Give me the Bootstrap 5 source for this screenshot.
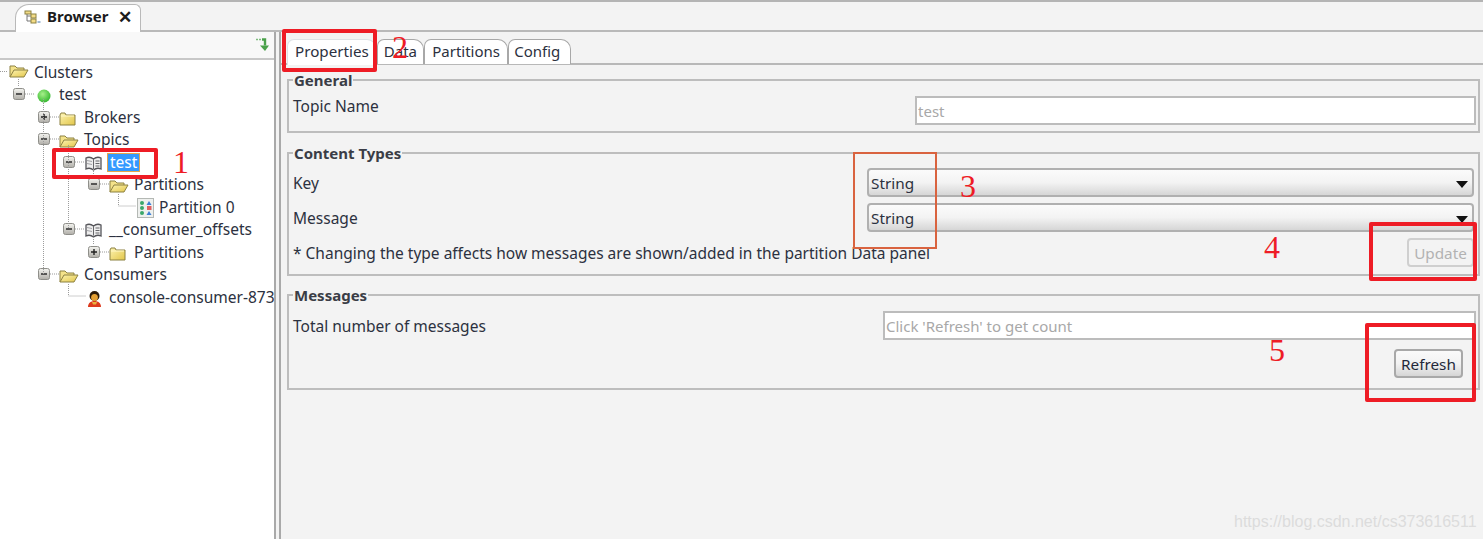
<!DOCTYPE html>
<html lang="en"><head><meta charset="utf-8"><title>Browser</title>
<link href="https://cdn.jsdelivr.net/npm/bootstrap@5.3.0/dist/css/bootstrap.min.css" rel="stylesheet">
<style>
html,body{height:539px;overflow:hidden}
body{background:#f3f3f3;font-family:"Noto Sans",sans-serif;font-size:15.5px;color:#2c3140;position:relative}
.topbar{height:32px;border-top:2px solid #b4b4b4;border-bottom:2px solid #b9b9b9;padding-left:15px;background:#f3f3f3}
.mtab{height:29px;margin-top:2px;width:126px;background:#fff;border:1px solid #b9b9b9;border-bottom:0;border-radius:14px 6px 0 0;font-weight:700;color:#1c1c1c;padding:0 0 5px 8px;gap:6px;font-size:15px}
.mtab .cl{font-size:17px;margin-left:3px;line-height:1}
.body-split{height:507px}
.lpane{width:276px;border-right:2px solid #a9a9a9;background:#fff;flex:none;position:relative;overflow:hidden}
.ltool{height:28px;background:#f8f8f8;border-bottom:2px solid #c8c8c8;padding:6px 3px 0 0}
.tree{white-space:nowrap;padding-top:.5px}
.trow{height:22.5px;line-height:22.5px}
.slot{width:25px;flex:none;height:22px}
.ico{margin-left:0;margin-top:1px}
.sel{background:#3399ff;color:#fff;outline:1px solid #e5a54b;line-height:17px;height:17px;padding:0 2px;margin-left:-1px}
.rpane{margin-left:3px;flex:1;border-left:2px solid #a9a9a9;padding:7px 3px 0 6px;min-width:0}
.tabs{height:26px;border-bottom:2px solid #b8b8b8;margin-right:-3px;margin-left:-6px;padding-left:6px;flex-wrap:nowrap}
.tabs .nav-link{height:25px;line-height:23px;padding:0 7.25px;font-size:15px;color:#2c3140;background:#fff;border:1px solid #a8a8a8;border-bottom:0;border-radius:7px 10px 0 0;margin:0}
.tabs .nav-link.active{color:#2c3140;background:#fff;height:26px;font-size:15.2px;padding:0 7px}
.tabs .nav-link.tab-d{padding:0 6px}
.tabs .nav-link.tab-c{padding:0 10px 0 5px}
.grp{border:2px solid #bdbdbd;padding:0 2px 0 4px;margin:0;position:relative}
.grp legend{float:none;width:auto;font-size:15px;font-weight:700;line-height:20px;margin:0;padding:0 1px;color:#3a3d46}
.grp1{margin-top:5px;padding-top:6px;padding-bottom:6px}
.grp2{margin-top:10px;padding-top:5px;padding-bottom:7px}
.grp3{margin-top:9px;padding-top:6px;padding-bottom:10px}
.frow{height:29px}
.lbl{padding-top:3px}
.lbl-top{padding-top:1px}
.fld{height:29px;border:2px solid #bcbcbc;border-radius:0;background:#fff;font-size:15px;padding:0 1px;color:#a8a8a8;box-shadow:none}
.fld:disabled{background:#fff}
.fld::placeholder{color:#a8a8a8}
.fld-a{width:561px}
.fld-b{width:593px}
.sel-box{width:607px;height:29px;border:2px solid #b0b0b0;border-radius:4px;background:linear-gradient(#fbfbfb,#f3f3f3 50%,#d6d6d6);padding:0 2px 0 2px;color:#2c3140;font-size:15.3px;line-height:24px;margin-right:2px}
.arrow{width:0;height:0;border-left:6px solid transparent;border-right:6px solid transparent;border-top:7px solid #111;margin-right:2px;margin-top:3px}
.btn-upd,.btn-upd:disabled{height:29px;width:67px;padding:0;font-size:15.3px;line-height:24px;border:2px solid #cfcfcf;border-radius:4px;color:#b2b2b2;background:#f3f3f3;opacity:1;margin-right:2px}
.btn-ref{height:29px;width:69px;padding:0;font-size:15.3px;line-height:24px;border:2px solid #a8a8a8;border-radius:4px;color:#23283a;background:linear-gradient(#fafafa,#f2f2f2 50%,#d5d5d5)}
.mt-6px{margin-top:6px}.mt-9px{margin-top:9px}.mr-13px{margin-right:13px}
.lines{position:absolute;left:0;top:0;pointer-events:none}
.rbox{position:absolute;border:4px solid #ee1c25;border-radius:2px}
.b1{left:52px;top:148px;width:106px;height:31px}
.b2{left:282px;top:29px;width:95px;height:43px}
.b3{left:853px;top:152px;width:84px;height:97px;border:2px solid #d9633f;border-radius:0}
.b4{left:1369px;top:222px;width:108px;height:59px}
.b5{left:1365px;top:323px;width:111px;height:79px}
.num{position:absolute;font-family:"Liberation Serif",serif;font-size:32px;line-height:32px;color:#ee1c25}
.n1{left:173px;top:146px}.n2{left:392px;top:31px}.n3{left:960px;top:170px}.n4{left:1264px;top:231px}.n5{left:1269px;top:334px}
.mark-url{position:absolute;left:1234px;top:511px;font-family:"Liberation Sans",sans-serif;font-size:16px;line-height:22px;color:#dcdcdc;white-space:nowrap}
</style></head>
<body>
<svg width="0" height="0" class="position-absolute">
<defs>
<linearGradient id="gt" x1="0" y1="0" x2="0" y2="1"><stop offset="0" stop-color="#f4f4f0"/><stop offset="1" stop-color="#b0aea8"/></linearGradient>
<linearGradient id="gf" x1="0" y1="0" x2="1" y2="1"><stop offset="0" stop-color="#fdf3b0"/><stop offset="1" stop-color="#e2c64a"/></linearGradient>
<radialGradient id="gb" cx=".4" cy=".35" r=".7"><stop offset="0" stop-color="#a6f08a"/><stop offset="1" stop-color="#2fb52a"/></radialGradient>
<symbol id="minus" viewBox="0 0 25 22"><rect x="4.500" y="5.500" width="11" height="11" rx="2" fill="url(#gt)" stroke="#8f8f8a"/><path d="M7 11h6" stroke="#222" stroke-width="1.400"/><path d="M16 11h9" stroke="#999" stroke-dasharray="1 1"/></symbol>
<symbol id="plus" viewBox="0 0 25 22"><rect x="4.500" y="5.500" width="11" height="11" rx="2" fill="url(#gt)" stroke="#8f8f8a"/><path d="M7 11h6M10 8v6" stroke="#222" stroke-width="1.400"/><path d="M16 11h9" stroke="#999" stroke-dasharray="1 1"/></symbol>
<symbol id="fopen" viewBox="0 0 20 16"><path d="M1 14V3h5l2 2h7v3" fill="#f4e28a" stroke="#8c8142"/><path d="M1 14 5 7h14l-4 7z" fill="url(#gf)" stroke="#8c8142"/></symbol>
<symbol id="fclosed" viewBox="0 0 17 14"><path d="M1 13V3l1-2h4l1 2h9v10z" fill="url(#gf)" stroke="#8c8142"/><path d="M2 4h13" stroke="#fff8c8"/></symbol>
<symbol id="book" viewBox="0 0 19 16"><path d="M9.500 3C7 1 4 1 2 2v11c2-1 5-1 7.500 1 2.500-2 5.500-2 7.500-1V2C15 1 12 1 9.500 3z" fill="#eee" stroke="#55555a" stroke-width="1.300"/><path d="M9.500 3v11M11.500 5h4M11.500 7.500h4M11.500 10h4" stroke="#66666a"/><path d="M3 4.500l5 1M3 7.500l5 1" stroke="#a2a2a6"/></symbol>
<symbol id="grid" viewBox="0 0 17 20"><rect x=".5" y=".5" width="16" height="19" fill="#eef0ee" stroke="#b4b8b4"/><circle cx="5" cy="5" r="2" fill="#3aa76a"/><circle cx="5" cy="10" r="2" fill="#3aa76a"/><circle cx="5" cy="15" r="2" fill="#3aa76a"/><path d="M12 3l2.500 4h-5z" fill="#3d7fd6"/><rect x="10" y="8" width="4.500" height="4" fill="#e06060"/><path d="M12 13l2.500 4h-5z" fill="#3d7fd6"/></symbol>
<symbol id="person" viewBox="0 0 15 18"><path d="M1 17c0-4 3-6 6.500-6s6.500 2 6.500 6z" fill="#dd3a1d"/><circle cx="7.500" cy="6" r="5" fill="#2c1a08"/><ellipse cx="7.500" cy="7.500" rx="3.400" ry="3.500" fill="#e5a032"/><path d="M5 12h5l-1 2.500H6z" fill="#e8b040"/></symbol>
</defs>
</svg>

<div class="topbar">
  <div class="mtab d-flex align-items-center">
    <svg width="17" height="14" viewBox="0 0 17 14"><path d="M3 3v8h6M3 6h5" stroke="#777" fill="none"/><rect x="1" y="1" width="6" height="3" fill="#f3dc86" stroke="#8c8142"/><rect x="7" y="4" width="5" height="4" fill="#f3dc86" stroke="#8c8142"/><rect x="7" y="9" width="5" height="4" fill="#f3dc86" stroke="#8c8142"/><path d="M13.500 12h3" stroke="#4477aa"/></svg>
    <span>Browser</span><span class="cl">✕</span>
  </div>
</div>
<div class="d-flex body-split">
  <div class="lpane">
    <div class="ltool d-flex justify-content-end">
      <svg width="16" height="14" viewBox="0 0 16 14"><path d="M1 1.500h2M4 1.500h2" stroke="#7cbb7c" stroke-width="1.500"/><path d="M7 1.500h3v6" fill="none" stroke="#4aa14a" stroke-width="2.400"/><path d="M5 7.500h9L10 13z" fill="#4aa14a"/></svg>
    </div>
    <div class="tree">
      <div class="trow d-flex" style="padding-left:9px"><svg class="ico" width="20" height="16" style="margin-top:2px"><use href="#fopen"/></svg><span style="margin-left:5px">Clusters</span></div>
      <div class="trow d-flex" style="padding-left:9px"><svg class="slot"><use href="#minus"/></svg><span class="slot"><svg class="ico" width="15" height="15" viewBox="0 0 15 15" style="margin-left:3px"><circle cx="7" cy="7" r="6.500" fill="url(#gb)"/></svg></span><span>test</span></div>
      <div class="trow d-flex" style="padding-left:34px"><svg class="slot"><use href="#plus"/></svg><span class="slot"><svg class="ico" width="17" height="14"><use href="#fclosed"/></svg></span><span>Brokers</span></div>
      <div class="trow d-flex" style="padding-left:34px"><svg class="slot"><use href="#minus"/></svg><span class="slot"><svg class="ico" width="20" height="16"><use href="#fopen"/></svg></span><span>Topics</span></div>
      <div class="trow d-flex" style="padding-left:59px"><svg class="slot"><use href="#minus"/></svg><span class="slot"><svg class="ico" width="19" height="16"><use href="#book"/></svg></span><span><span class="sel d-inline-block">test</span></span></div>
      <div class="trow d-flex" style="padding-left:84px"><svg class="slot"><use href="#minus"/></svg><span class="slot"><svg class="ico" width="20" height="16"><use href="#fopen"/></svg></span><span>Partitions</span></div>
      <div class="trow d-flex" style="padding-left:109px"><span class="slot"></span><span class="slot"><svg class="ico" width="17" height="20" style="margin-left:3px;margin-top:0"><use href="#grid"/></svg></span><span>Partition 0</span></div>
      <div class="trow d-flex" style="padding-left:59px"><svg class="slot"><use href="#minus"/></svg><span class="slot"><svg class="ico" width="19" height="16"><use href="#book"/></svg></span><span>__consumer_offsets</span></div>
      <div class="trow d-flex" style="padding-left:84px"><svg class="slot"><use href="#plus"/></svg><span class="slot"><svg class="ico" width="17" height="14"><use href="#fclosed"/></svg></span><span>Partitions</span></div>
      <div class="trow d-flex" style="padding-left:34px"><svg class="slot"><use href="#minus"/></svg><span class="slot"><svg class="ico" width="20" height="16"><use href="#fopen"/></svg></span><span>Consumers</span></div>
      <div class="trow d-flex" style="padding-left:59px"><span class="slot"></span><span class="slot"><svg class="ico" width="15" height="18" style="margin-left:3px"><use href="#person"/></svg></span><span>console-consumer-873</span></div>
    </div>
    <svg class="lines" width="275" height="507" viewBox="0 32 275 507"><g stroke="#9c9c9c" stroke-dasharray="1 1" fill="none"><path d="M0 71.500h8M18.500 79v8M43.500 99v175M68.500 145v84M93.500 169v10M118.500 194v12h17M93.500 235v10M68.500 284v12h17"/></g></svg>
  </div>
  <div class="rpane">
    <ul class="nav nav-tabs tabs">
      <li class="nav-item"><a class="nav-link active" href="#">Properties</a></li>
      <li class="nav-item"><a class="nav-link tab-d" href="#">Data</a></li>
      <li class="nav-item"><a class="nav-link" href="#">Partitions</a></li>
      <li class="nav-item"><a class="nav-link tab-c" href="#">Config</a></li>
    </ul>
    <fieldset class="grp grp1"><legend>General</legend>
      <div class="frow d-flex justify-content-between"><span class="lh-sm lbl-top">Topic Name</span><input class="form-control fld fld-a" placeholder="test" disabled></div>
    </fieldset>
    <fieldset class="grp grp2"><legend>Content Types</legend>
      <div class="frow d-flex justify-content-between align-items-center"><span class="lbl">Key</span><div class="sel-box d-flex justify-content-between align-items-center"><span>String</span><span class="arrow"></span></div></div>
      <div class="frow d-flex justify-content-between align-items-center mt-6px"><span class="lbl">Message</span><div class="sel-box d-flex justify-content-between align-items-center"><span>String</span><span class="arrow"></span></div></div>
      <div class="frow d-flex justify-content-between align-items-center mt-6px"><span class="lbl">* Changing the type affects how messages are shown/added in the partition Data panel</span><button class="btn btn-upd" disabled>Update</button></div>
    </fieldset>
    <fieldset class="grp grp3"><legend>Messages</legend>
      <div class="frow d-flex justify-content-between align-items-center"><span class="lbl">Total number of messages</span><input class="form-control fld fld-b" placeholder="Click 'Refresh' to get count" disabled></div>
      <div class="d-flex justify-content-end mt-9px"><button class="btn btn-ref mr-13px">Refresh</button></div>
    </fieldset>
  </div>
</div>
<div class="rbox b1"></div><div class="rbox b2"></div><div class="rbox b3"></div><div class="rbox b4"></div><div class="rbox b5"></div>
<span class="num n1">1</span><span class="num n2">2</span><span class="num n3">3</span><span class="num n4">4</span><span class="num n5">5</span>
<span class="mark-url">https://blog.csdn.net/cs373616511</span>
<script src="https://cdn.jsdelivr.net/npm/bootstrap@5.3.0/dist/js/bootstrap.bundle.min.js"></script>
</body></html>
